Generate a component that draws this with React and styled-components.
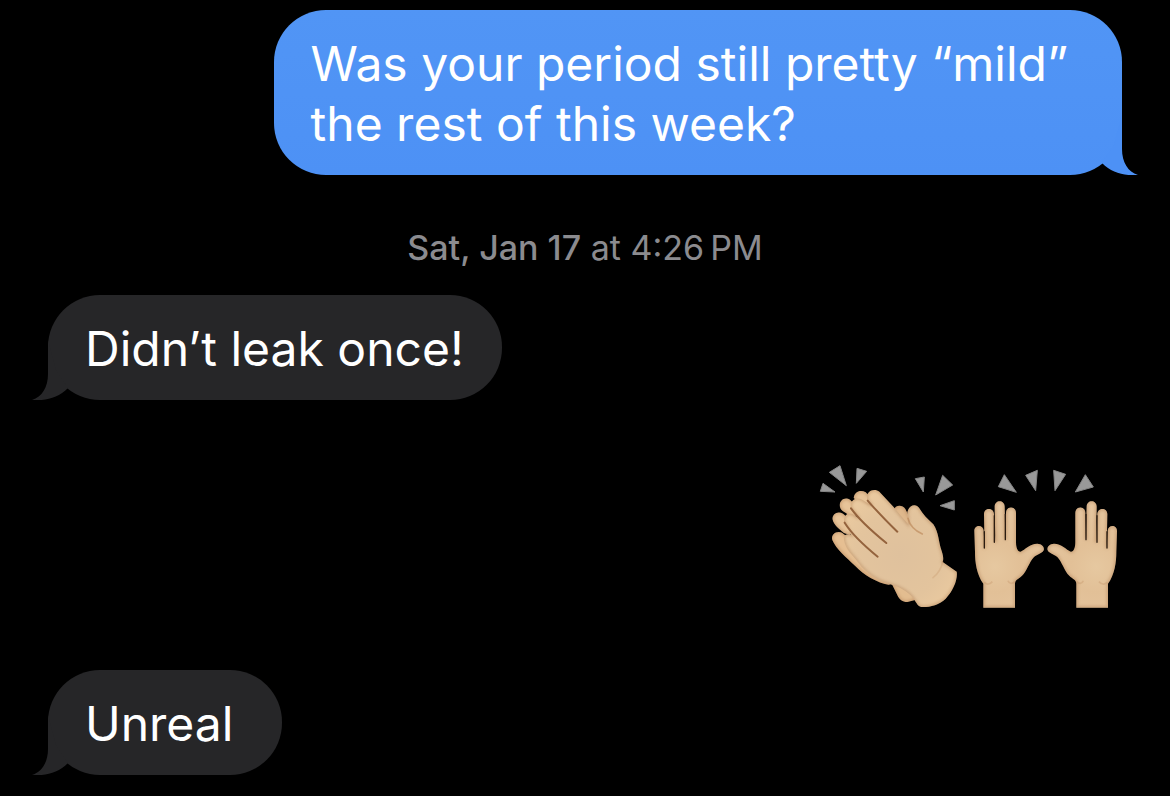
import React from 'react';
import styled, { createGlobalStyle } from 'styled-components';

const GlobalStyle = createGlobalStyle`
  * {
    box-sizing: border-box;
  }

  body {
    margin: 0;
    background-color: #000;
    font-family: Inter, 'Liberation Sans', sans-serif;
  }
`;

const Conversation = styled.main`
  display: flex;
  flex-direction: column;
  width: 100%;
  padding: 10px 48px 20px;
`;

const Message = styled.div`
  position: relative;
  align-self: ${({ $sent }) => ($sent ? 'flex-end' : 'flex-start')};
  min-width: 234px;
  max-width: 79%;
  padding: 24px 38px 21px 37px;
  border-radius: 52px;
  background: ${({ $sent }) =>
    $sent ? 'linear-gradient(#5195f5, #4d91f5)' : '#262628'};
  color: ${({ $sent }) => ($sent ? '#4d91f5' : '#262628')};
`;

const MessageText = styled.p`
  margin: 0;
  color: #fff;
  font-size: 48px;
  line-height: 60px;
`;

const TailShape = styled.svg`
  position: absolute;
  bottom: 0;
  ${({ $sent }) => ($sent ? 'right: -16px;' : 'left: -16px;')}
  transform: ${({ $sent }) => ($sent ? 'none' : 'scaleX(-1)')};
`;

const Timestamp = styled.time`
  align-self: center;
  margin: 53px 0 27px;
  color: #8b8b8f;
  font-size: 34px;
  line-height: 40px;
`;

const TimestampDay = styled.span`
  font-weight: 500;
`;

const EmojiMessage = styled.div`
  display: flex;
  align-self: flex-end;
  margin: 60px 0 55px;
`;

const Tail = ({ sent }) => (
  <TailShape $sent={sent} width="54" height="60" viewBox="0 0 54 60" aria-hidden="true">
    <path
      d="M38 0V34C38 47 44 57 54 60C40 61 28 58 18 48L30 30Z"
      fill="currentColor"
    />
  </TailShape>
);

const Bubble = ({ sent = false, children }) => (
  <Message $sent={sent}>
    <Tail sent={sent} />
    <MessageText>{children}</MessageText>
  </Message>
);

// A filled piece of skin with a soft darker rim kept inside its outline
const Skin = ({ id, d, fill }) => (
  <g>
    <clipPath id={`${id}-clip`}>
      <path d={d} />
    </clipPath>
    <path d={d} fill={fill} />
    <g clipPath={`url(#${id}-clip)`}>
      <path
        d={d}
        fill="none"
        stroke="#a8754a"
        strokeWidth="7"
        opacity="0.5"
        filter={`url(#${id}-soft)`}
      />
    </g>
    <filter id={`${id}-soft`} x="-10%" y="-10%" width="120%" height="120%">
      <feGaussianBlur stdDeviation="4" />
    </filter>
  </g>
);

const Rays = ({ d }) => (
  <path d={d} fill="#999" stroke="#858585" strokeWidth="3" strokeLinejoin="round" />
);

const ClappingHands = () => (
  <svg width="150" height="155" viewBox="0 15 450 465" role="img" aria-label="Clapping hands">
    <defs>
      <radialGradient id="clap-front" gradientUnits="userSpaceOnUse" cx="270" cy="300" r="220">
        <stop offset="0" stopColor="#dfc19d" />
        <stop offset="0.6" stopColor="#e3c49d" />
        <stop offset="1" stopColor="#eccba0" />
      </radialGradient>
      <filter id="crease-soft" x="-10%" y="-10%" width="120%" height="120%">
        <feGaussianBlur stdDeviation="2" />
      </filter>
    </defs>
    <Rays d="M58 52L90 32L109 92ZM141 40L170 49L139 85ZM39 85L75 111L31 109ZM316 71L343 66L340 111ZM398 61L428 90L377 120ZM433 137V165L390 152Z" />
    <Skin
      id="clap-back-thumb"
      d="M250 168C254 150 275 146 286 162L315 220L270 220Z"
      fill="#dfb88c"
    />
    <Skin
      id="clap-back-wrist"
      d="M243 382L262 420C268 434 278 441 292 441L315 435L310 395Z"
      fill="#e3bd90"
    />
    <Skin
      id="clap-back-4"
      d="M67 255C62 238 80 226 96 233L130 260L240 390C200 384 160 358 135 332C110 308 78 282 67 255Z"
      fill="#e6bf92"
    />
    <Skin
      id="clap-back-3"
      d="M68 194C65 177 84 166 99 176L145 215L120 240L102 234C88 222 72 210 68 194Z"
      fill="#e8c499"
    />
    <Skin
      id="clap-back-2"
      d="M90 156C86 138 103 124 120 134L155 170L125 190L108 174C100 170 93 166 90 156Z"
      fill="#e8c499"
    />
    <Skin
      id="clap-back-1"
      d="M131 128C134 110 151 103 167 112L195 140L160 160Z"
      fill="#e8c499"
    />
    <Skin
      id="clap-hand"
      d="M102 256C98 240 112 234 124 240L103 202C97 184 116 168 132 180L147 190L123 160C116 140 137 122 157 134L185 152L173 136C163 112 190 96 208 110L250 155L294 207L292 172C296 150 318 143 328 160C338 178 354 194 370 208C386 230 386 264 395 288C400 302 401 314 398 321L440 350C444 372 430 408 407 431C388 451 353 458 334 456C322 454 317 438 309 429C293 410 270 396 240 388C198 377 165 350 146 325C128 300 106 284 102 256Z"
      fill="url(#clap-front)"
    />
    <path
      d="M125 240L135 247L110 215ZM140 184L150 198L128 168ZM178 146L190 156L172 133Z"
      fill="#dfbc90"
    />
    <g
      fill="none"
      stroke="#94633d"
      strokeLinecap="round"
      strokeWidth="6"
      filter="url(#crease-soft)"
    >
      <path d="M173 137C190 156 220 190 262 230" />
      <path d="M123 160C143 188 180 224 229 264" />
      <path d="M104 203C122 232 158 268 203 305" />
    </g>
    <path
      d="M294 190C299 211 315 227 337 237"
      fill="none"
      stroke="#b57d4d"
      strokeLinecap="round"
      strokeWidth="5"
      opacity="0.55"
      filter="url(#crease-soft)"
    />
    <path
      d="M398 320C394 342 382 358 369 368"
      fill="none"
      stroke="#b57d4d"
      strokeLinecap="round"
      strokeWidth="5"
      opacity="0.2"
      filter="url(#crease-soft)"
    />
  </svg>
);

const raisedHand =
  'M70 458V386C50 358 45 322 45 290L43 228C43 208 70 208 71 228L74 280L72 178C72 157 101 157 102 178L106 262L104 155C104 133 134 133 134 155L136 254L138 174C138 152 168 152 168 174V262C168 280 174 292 182 290C195 284 210 266 232 266C246 267 254 276 251 286C246 296 232 298 222 306C208 320 200 350 186 362C176 372 165 374 165 386V458Z';

const RaisedHand = ({ id }) => (
  <g>
    <Skin id={id} d={raisedHand} fill="url(#raised-skin)" />
    <path
      d="M73 230V279M103 182V262M136 178V254"
      fill="none"
      stroke="#2b1c10"
      strokeWidth="4"
      strokeLinecap="round"
    />
    <path
      d="M73 382C80 391 91 387 97 380M144 377C148 388 158 387 164 380"
      fill="none"
      stroke="#c39366"
      strokeWidth="5"
      opacity="0.35"
    />
  </g>
);

const RaisedHands = () => (
  <svg width="162" height="155" viewBox="0 15 486 465" role="img" aria-label="Raised hands">
    <defs>
      <radialGradient id="raised-skin" gradientUnits="userSpaceOnUse" cx="105" cy="335" r="190">
        <stop offset="0" stopColor="#e6c8a0" />
        <stop offset="0.4" stopColor="#e2c097" />
        <stop offset="1" stopColor="#e5c6a0" />
      </radialGradient>
    </defs>
    <Rays d="M133 59L169 112L115 95ZM197 61L232 46L227 107ZM281 46L317 58L285 107ZM376 59L400 96L346 111Z" />
    <RaisedHand id="raised-left" />
    <g transform="translate(514 0) scale(-1 1)">
      <RaisedHand id="raised-right" />
    </g>
  </svg>
);

const App = () => (
  <>
    <GlobalStyle />
    <Conversation>
      <Bubble sent>Was your period still pretty “mild” the rest of this week?</Bubble>
      <Timestamp>
        <TimestampDay>Sat, Jan 17</TimestampDay> at 4:26{'\u202f'}PM
      </Timestamp>
      <Bubble>Didn’t leak once!</Bubble>
      <EmojiMessage>
        <ClappingHands />
        <RaisedHands />
      </EmojiMessage>
      <Bubble>Unreal</Bubble>
    </Conversation>
  </>
);

export default App;
